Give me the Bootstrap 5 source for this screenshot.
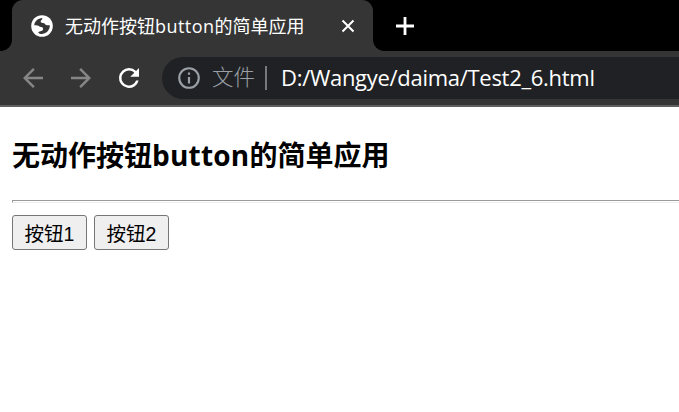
<!DOCTYPE html>
<html lang="zh-CN">
<head>
<meta charset="utf-8">
<title>无动作按钮button的简单应用</title>
<link href="https://cdn.jsdelivr.net/npm/bootstrap@5.3.0/dist/css/bootstrap.min.css" rel="stylesheet">
<style>
body{font-family:"Open Sans","Noto Sans CJK SC",sans-serif;background:#fff;color:#000;overflow:hidden}
svg{display:block;flex:none}
.tabstrip{height:51px;background:#000;padding-left:12px}
.browser-tab{width:361px;height:51px;background:#353535;border-radius:11px 11px 0 0;color:#fff;padding:0 17px 0 19px;position:relative}
.browser-tab::before,.browser-tab::after{content:"";position:absolute;bottom:0;width:11px;height:11px}
.browser-tab::before{left:-11px;background:radial-gradient(circle at 0 0,#000 10.5px,#353535 11.2px)}
.browser-tab::after{right:-11px;background:radial-gradient(circle at 100% 0,#000 10.5px,#353535 11.2px)}
.tab-title{font-size:18px;line-height:26px;margin-left:12px;white-space:nowrap}
.tab-title .latin{letter-spacing:.45px}
.new-tab{margin-left:22px}
.toolbar{height:56px;background:#353535;border-bottom:2px solid #5f5f5f;padding-left:18px;gap:18px}
.omnibox{height:42px;background:#202124;border-radius:21px 0 0 21px;padding-left:14px;white-space:nowrap}
.scheme{font-size:21.5px;color:#9aa0a6;margin-left:10px;font-weight:300;padding-bottom:1px}
.divider{width:2px;height:24px;background:#77797c;margin:0 13px 0 10px}
.address{font-size:22px;color:#fff;font-weight:500;letter-spacing:-.29px;padding:0 0 2px 1px}
.page{padding:28px 0 0 12px}
.page h3{font-size:28px;line-height:40px;font-weight:700;margin:0;white-space:nowrap}
.page h3 .latin{letter-spacing:.2px}
.rule{height:3px;border:1px solid #9a9a9a;border-right:0;border-bottom-color:#eee;margin:25px 0 12px}
.button-row{gap:7px}
.page .btn{width:75px;height:35px;padding:2px 0 0;border:1px solid #767676;border-radius:3px;background:#efefef;color:#000;font:19.5px/32px "Liberation Sans","Noto Sans CJK SC",sans-serif}
</style>
<script src="https://cdn.jsdelivr.net/npm/bootstrap@5.3.0/dist/js/bootstrap.bundle.min.js"></script>
</head>
<body>
<header>
<div class="tabstrip d-flex align-items-center">
<div class="browser-tab d-flex align-items-center">
<svg width="22" height="22" viewBox="0 0 22 22"><circle cx="11" cy="11" r="10.8" fill="#fff"/><path d="M3.2 10.3C3.6 6.6 7 3.2 11.3 3.1C12 4.5 9.8 5.2 9.6 6.6C9.6 8 11.5 8.2 13.3 8.3C14 9.6 15 10.5 18.8 10.3C19 14.8 15.6 18.6 11.2 18.9C8.7 18.9 7.4 18.2 7.2 17.4C8.6 15.8 12.3 16.2 12.1 13.9C12 12.2 10.5 11.9 8.8 11.8C7.9 10.7 5.6 10.3 3.2 10.3Z" fill="#353535"/></svg>
<span class="tab-title">无动作按钮<span class="latin">button</span>的简单应用</span>
<svg class="ms-auto" width="16" height="16" viewBox="0 0 16 16" stroke="#fff" stroke-width="2" fill="none"><path d="M2.5 2.5l11 11M13.5 2.5l-11 11"/></svg>
</div>
<svg class="new-tab" width="20" height="20" viewBox="0 0 20 20" stroke="#fff" stroke-width="2.8" fill="none"><path d="M10 1v18M1 10h18"/></svg>
</div>
<div class="toolbar d-flex align-items-center">
<svg width="30" height="30" viewBox="0 0 24 24" fill="#868686"><path d="M20 11H7.8l5.6-5.6L12 4l-8 8 8 8 1.4-1.4L7.8 13H20z"/></svg>
<svg width="30" height="30" viewBox="0 0 24 24" fill="#868686"><path d="M4 13h12.2l-5.6 5.6L12 20l8-8-8-8-1.4 1.4 5.6 5.6H4z"/></svg>
<svg width="30" height="30" viewBox="0 0 24 24" fill="#fff"><path d="M17.65 6.35A7.95 7.95 0 0 0 12 4a8 8 0 1 0 7.73 10h-2.08A6 6 0 1 1 12 6c1.66 0 3.14.69 4.22 1.78L13 11h7V4z"/></svg>
<div class="omnibox d-flex align-items-center flex-grow-1">
<svg width="26" height="26" viewBox="0 0 24 24" fill="#9aa0a6"><path d="M11 17h2v-6h-2zM12 2a10 10 0 1 0 0 20 10 10 0 0 0 0-20m0 18a8 8 0 1 1 0-16 8 8 0 0 1 0 16M11 9h2V7h-2z"/></svg>
<span class="scheme">文件</span><span class="divider"></span><span class="address">D:/Wangye/daima/Test2_6.html</span>
</div>
</div>
</header>
<main class="page">
<h3>无动作按钮<span class="latin">button</span>的简单应用</h3>
<div class="rule"></div>
<div class="button-row d-flex"><button type="button" class="btn">按钮1</button><button type="button" class="btn">按钮2</button></div>
</main>
</body>
</html>
